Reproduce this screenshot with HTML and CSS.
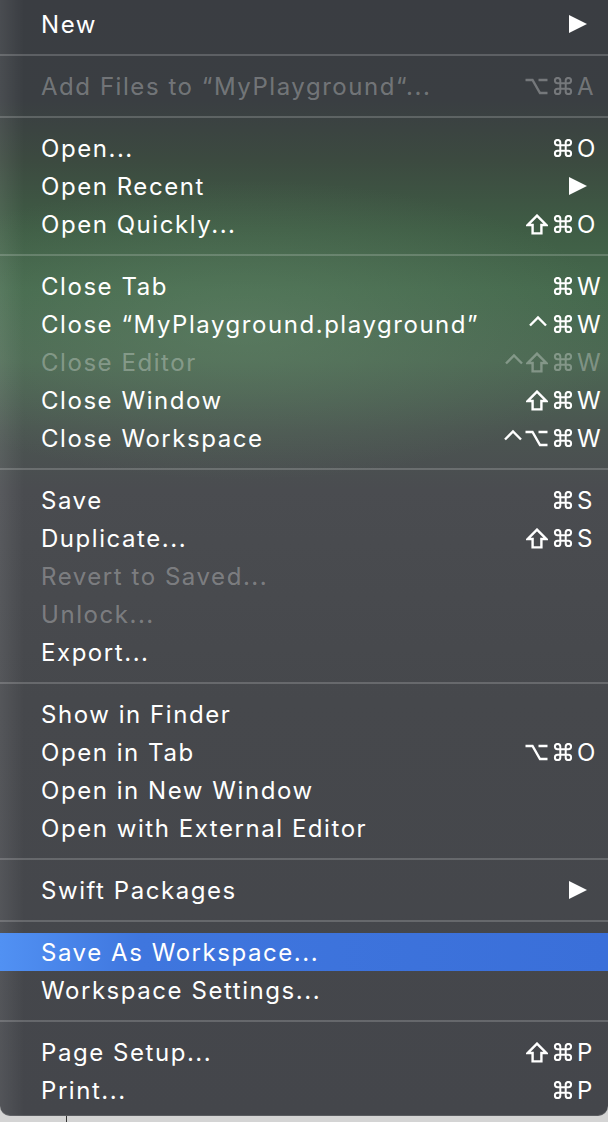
FILE: index.html
```html
<!DOCTYPE html>
<html>
<head>
<meta charset="utf-8">
<link rel="stylesheet" href="styles.css">
</head>
<body>
<svg class="defs" aria-hidden="true">
  <symbol id="cmd" viewBox="2 2 20 20"><path d="M15 6v12a3 3 0 1 0 3-3H6a3 3 0 1 0 3 3V6a3 3 0 1 0-3 3h12a3 3 0 1 0-3-3"/></symbol>
  <symbol id="shift" viewBox="0 0 22 21"><path d="M11 1.6L20.2 11H15.4V19.4H6.6V11H1.8Z"/></symbol>
  <symbol id="opt" viewBox="0 0 23 17"><path d="M0.5 2H7.5L15 15H22.5M13.5 2H22.5"/></symbol>
  <symbol id="ctrl" viewBox="0 0 20 18"><path d="M2 10.5L10 2.5L18 10.5"/></symbol>
</svg>
<div class="menu">
  <div class="row"><span class="label">New</span><svg class="arrow" viewBox="0 0 18 18"><polygon points="0,0 18,9 0,18"/></svg></div>
  <div class="sep"></div>
  <div class="row dis"><span class="label">Add Files to “MyPlayground“...</span><span class="keys"><svg class="mod opt"><use href="#opt"/></svg><svg class="mod cmd"><use href="#cmd"/></svg><span class="k">A</span></span></div>
  <div class="sep"></div>
  <div class="row"><span class="label">Open...</span><span class="keys"><svg class="mod cmd"><use href="#cmd"/></svg><span class="k">O</span></span></div>
  <div class="row"><span class="label">Open Recent</span><svg class="arrow" viewBox="0 0 18 18"><polygon points="0,0 18,9 0,18"/></svg></div>
  <div class="row"><span class="label">Open Quickly...</span><span class="keys"><svg class="mod shift"><use href="#shift"/></svg><svg class="mod cmd"><use href="#cmd"/></svg><span class="k">O</span></span></div>
  <div class="sep"></div>
  <div class="row"><span class="label">Close Tab</span><span class="keys"><svg class="mod cmd"><use href="#cmd"/></svg><span class="k">W</span></span></div>
  <div class="row"><span class="label">Close “MyPlayground.playground”</span><span class="keys"><svg class="mod ctrl"><use href="#ctrl"/></svg><svg class="mod cmd"><use href="#cmd"/></svg><span class="k">W</span></span></div>
  <div class="row dis"><span class="label">Close Editor</span><span class="keys"><svg class="mod ctrl"><use href="#ctrl"/></svg><svg class="mod shift"><use href="#shift"/></svg><svg class="mod cmd"><use href="#cmd"/></svg><span class="k">W</span></span></div>
  <div class="row"><span class="label">Close Window</span><span class="keys"><svg class="mod shift"><use href="#shift"/></svg><svg class="mod cmd"><use href="#cmd"/></svg><span class="k">W</span></span></div>
  <div class="row"><span class="label">Close Workspace</span><span class="keys"><svg class="mod ctrl"><use href="#ctrl"/></svg><svg class="mod opt"><use href="#opt"/></svg><svg class="mod cmd"><use href="#cmd"/></svg><span class="k">W</span></span></div>
  <div class="sep"></div>
  <div class="row"><span class="label">Save</span><span class="keys"><svg class="mod cmd"><use href="#cmd"/></svg><span class="k">S</span></span></div>
  <div class="row"><span class="label">Duplicate...</span><span class="keys"><svg class="mod shift"><use href="#shift"/></svg><svg class="mod cmd"><use href="#cmd"/></svg><span class="k">S</span></span></div>
  <div class="row dis"><span class="label">Revert to Saved...</span></div>
  <div class="row dis"><span class="label">Unlock...</span></div>
  <div class="row"><span class="label">Export...</span></div>
  <div class="sep"></div>
  <div class="row"><span class="label">Show in Finder</span></div>
  <div class="row"><span class="label">Open in Tab</span><span class="keys"><svg class="mod opt"><use href="#opt"/></svg><svg class="mod cmd"><use href="#cmd"/></svg><span class="k">O</span></span></div>
  <div class="row"><span class="label">Open in New Window</span></div>
  <div class="row"><span class="label">Open with External Editor</span></div>
  <div class="sep"></div>
  <div class="row"><span class="label">Swift Packages</span><svg class="arrow" viewBox="0 0 18 18"><polygon points="0,0 18,9 0,18"/></svg></div>
  <div class="sep"></div>
  <div class="row hl"><span class="label">Save As Workspace...</span></div>
  <div class="row"><span class="label">Workspace Settings...</span></div>
  <div class="sep"></div>
  <div class="row"><span class="label">Page Setup...</span><span class="keys"><svg class="mod shift"><use href="#shift"/></svg><svg class="mod cmd"><use href="#cmd"/></svg><span class="k">P</span></span></div>
  <div class="row"><span class="label">Print...</span><span class="keys"><svg class="mod cmd"><use href="#cmd"/></svg><span class="k">P</span></span></div>
</div>
<div class="under"><div class="under-line"></div></div>
</body>
</html>
```
FILE: styles.css
```css
html, body {
  margin: 0;
  padding: 0;
}
body {
  width: 608px;
  height: 1122px;
  overflow: hidden;
  background: #d4d4d4;
  font-family: Inter, "Noto Sans", "DejaVu Sans", sans-serif;
}
.defs {
  display: none;
}
.menu {
  padding: 5px 0 7px;
  border-radius: 0 0 10px 10px;
  color: #ffffff;
  font-size: 24px;
  background:
    linear-gradient(90deg, rgba(255,255,255,0.08) 0px, rgba(255,255,255,0) 24px),
    radial-gradient(ellipse 380px 150px at 40% 330px, rgba(105,140,110,0.45), rgba(105,140,110,0)),
    linear-gradient(180deg, #3a3d42 0px, #3a3e42 100px, #3c4a40 160px, #3f5d45 230px, #45694d 290px, #4c6853 360px, #4b5551 430px, #4a4c50 490px, #46484c 700px, #44464b 1116px);
  box-shadow: inset 0 -1px 0 rgba(255,255,255,0.12);
}
.row {
  height: 38px;
  display: flex;
  align-items: center;
  padding: 0 4px 0 41px;
  white-space: nowrap;
}
.label {
  flex: 1;
  letter-spacing: 1.55px;
}
.dis {
  color: rgba(255,255,255,0.3);
}
.hl {
  background: linear-gradient(90deg, #5191f3 0px, #3f76de 140px, #3a6fd9 100%);
}
.keys {
  display: flex;
  align-items: center;
}
.mod {
  fill: none;
  stroke: currentColor;
  stroke-width: 2.4;
  stroke-linejoin: miter;
  overflow: visible;
}
.mod use {
  vector-effect: non-scaling-stroke;
}
.mod.cmd {
  width: 22px;
  height: 18px;
  margin-left: 4px;
}
.mod.cmd use, .mod.cmd path {
  stroke-width: 2.2;
}
.mod.shift {
  width: 22px;
  height: 21px;
  margin-left: 2px;
}
.mod.opt {
  width: 23px;
  height: 17px;
  margin-left: 2px;
}
.mod.ctrl {
  width: 20px;
  height: 18px;
  margin-left: 2px;
  stroke-linejoin: miter;
}
.k {
  width: 30px;
  padding-left: 3px;
  box-sizing: border-box;
  font-size: 24px;
}
.arrow {
  width: 18px;
  height: 18px;
  margin-right: 17px;
  fill: #ffffff;
}
.sep {
  height: 2px;
  margin: 11px 0;
  background: rgba(255,255,255,0.18);
}
.under {
  height: 6px;
}
.under-line {
  margin-left: 66px;
  height: 6px;
  border-left: 1px solid #333;
}
```
